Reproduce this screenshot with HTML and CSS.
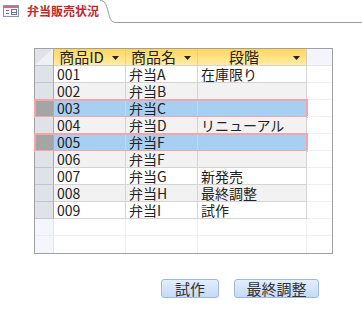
FILE: index.html
```html
<!DOCTYPE html>
<html lang="ja">
<head>
    <meta charset="UTF-8">
    <meta name="viewport" content="width=device-width, initial-scale=1.0">
    <title>弁当販売状況</title>
    <link rel="stylesheet" href="styles.css">
</head>
<body>
    <div class="tabbar">
        <div class="tab">
            <svg class="form-icon" width="16" height="12" viewBox="0 0 16 12">
                <rect x="0.5" y="0.5" width="15" height="11" fill="#f3f5f9" stroke="#8a94a8"/>
                <rect x="1" y="1" width="14" height="2" fill="#d06a8a"/>
                <rect x="3" y="5" width="3" height="1" fill="#6a7484"/>
                <rect x="3" y="8" width="3" height="1" fill="#6a7484"/>
                <rect x="8.5" y="4.5" width="5" height="5" fill="#ffffff" stroke="#6a7484"/>
                <rect x="9" y="7" width="4" height="1" fill="#6a7484"/>
            </svg>
            <span class="tab-title">弁当販売状況</span>
        </div>
        <svg class="tab-curve" width="16" height="23" viewBox="0 0 16 23">
            <path d="M0 0.5 C5 0.5 6 4 8 11 C10 19 11 22.5 16 22.5" fill="none" stroke="#9c9c9c"/>
        </svg>
        <div class="tab-rest"></div>
    </div>

    <div class="main">
        <div class="sheet">
            <div class="row head">
                <div class="rec">
                    <div class="sel corner"></div>
                    <div class="hcell"><span>商品ID</span><svg class="arrow" width="7" height="4"><polygon points="0,0 7,0 3.5,4" fill="#222"/></svg></div>
                    <div class="hcell"><span>商品名</span><svg class="arrow" width="7" height="4"><polygon points="0,0 7,0 3.5,4" fill="#222"/></svg></div>
                    <div class="hcell"><span>段階</span><svg class="arrow" width="7" height="4"><polygon points="0,0 7,0 3.5,4" fill="#222"/></svg></div>
                </div>
                <div class="fill"></div>
            </div>

            <div class="row">
                <div class="rec"><div class="sel"></div><div class="cell">001</div><div class="cell">弁当A</div><div class="cell">在庫限り</div></div>
                <div class="fill"></div>
            </div>
            <div class="row alt">
                <div class="rec"><div class="sel"></div><div class="cell">002</div><div class="cell">弁当B</div><div class="cell"></div></div>
                <div class="fill"></div>
            </div>
            <div class="row selected">
                <div class="rec"><div class="sel"></div><div class="cell">003</div><div class="cell">弁当C</div><div class="cell"></div></div>
                <div class="fill"></div>
            </div>
            <div class="row alt">
                <div class="rec"><div class="sel"></div><div class="cell">004</div><div class="cell">弁当D</div><div class="cell">リニューアル</div></div>
                <div class="fill"></div>
            </div>
            <div class="row selected">
                <div class="rec"><div class="sel"></div><div class="cell">005</div><div class="cell">弁当F</div><div class="cell"></div></div>
                <div class="fill"></div>
            </div>
            <div class="row alt">
                <div class="rec"><div class="sel"></div><div class="cell">006</div><div class="cell">弁当F</div><div class="cell"></div></div>
                <div class="fill"></div>
            </div>
            <div class="row">
                <div class="rec"><div class="sel"></div><div class="cell">007</div><div class="cell">弁当G</div><div class="cell">新発売</div></div>
                <div class="fill"></div>
            </div>
            <div class="row alt">
                <div class="rec"><div class="sel"></div><div class="cell">008</div><div class="cell">弁当H</div><div class="cell">最終調整</div></div>
                <div class="fill"></div>
            </div>
            <div class="row">
                <div class="rec"><div class="sel"></div><div class="cell">009</div><div class="cell">弁当I</div><div class="cell">試作</div></div>
                <div class="fill"></div>
            </div>

            <div class="row empty">
                <div class="rec"><div class="sel"></div><div class="cell"></div><div class="cell"></div><div class="cell"></div></div>
                <div class="fill"></div>
            </div>
            <div class="row empty">
                <div class="rec"><div class="sel"></div><div class="cell"></div><div class="cell"></div><div class="cell"></div></div>
                <div class="fill"></div>
            </div>
        </div>

        <div class="actions">
            <button class="btn btn-short">試作</button>
            <button class="btn btn-long">最終調整</button>
        </div>
    </div>
</body>
</html>
```

FILE: styles.css
```css
body {
    margin: 0;
    font-family: "Noto Sans CJK JP", "Liberation Sans", sans-serif;
    background: #ffffff;
    color: #222222;
}

/* tab strip */
.tabbar {
    display: flex;
    height: 23px;
}

.tab {
    width: 100px;
    display: flex;
    align-items: center;
    padding-left: 3px;
    box-sizing: border-box;
}

.form-icon {
    flex: none;
    margin-top: -1px;
}

.tab-title {
    margin-left: 8px;
    font-size: 12px;
    font-weight: bold;
    color: #c0282d;
    line-height: 14px;
    margin-top: -2px;
}

.tab-curve {
    flex: none;
    display: block;
}

.tab-rest {
    flex: 1;
    border-bottom: 1px solid #9c9c9c;
}

/* datasheet */
.main {
    padding: 25px 0 0 34px;
}

.sheet {
    width: 299px;
    border: 1px solid #a0a0a0;
    box-sizing: border-box;
    font-size: 14px;
}

.row {
    display: flex;
    height: 17px;
}

.rec {
    display: grid;
    grid-template-columns: 19px 72px 72px 109px;
    flex: none;
}

.fill {
    flex: 1;
    border-bottom: 1px solid #f0f0f0;
}

.sel,
.cell,
.hcell {
    box-sizing: border-box;
    border-right: 1px solid #d4d4d4;
    border-bottom: 1px solid #d4d4d4;
}

.sel {
    background: #dfe3e8;
    border-right-color: #a8acb2;
    border-bottom-color: #c2c6cc;
}

.cell {
    padding-left: 3px;
    line-height: 16px;
    white-space: nowrap;
}

/* header row */
.corner {
    background: linear-gradient(to top left, #eef0f3 50%, #dfe3e8 51%);
}

.hcell {
    display: flex;
    align-items: center;
    padding-right: 6px;
    background: linear-gradient(#ffd65e, #ffeca6);
    border-right-color: #d8cfae;
    font-size: 15px;
    line-height: 16px;
}

.hcell span {
    flex: 1;
    text-align: center;
    margin-right: 3px;
    white-space: nowrap;
}

.arrow {
    flex: none;
    margin-top: 2px;
}

.head .fill {
    background: #f4f4fc;
    border-bottom-color: #e4e4ec;
}

/* row states */
.alt .cell {
    background: #f2f2f2;
}

.selected .rec {
    background: #a7cff1;
    outline: 2px solid #f5a5a9;
    outline-offset: -1px;
}

.selected .sel {
    background: #a5a5a5;
}

.empty .sel {
    background: #f5f5ff;
    border-right-color: #e2e2ea;
    border-bottom-color: #ececf4;
}

.empty .cell {
    border-color: #f0f0f0;
}

.empty:last-child .sel,
.empty:last-child .cell,
.empty:last-child .fill {
    border-bottom: none;
}

/* buttons */
.actions {
    display: flex;
    gap: 15px;
    margin-top: 25px;
    padding-left: 127px;
}

.btn {
    height: 19px;
    padding: 0;
    border: 1px solid #99b9e0;
    border-radius: 3px;
    background: linear-gradient(#e4eefc, #c4daf6);
    font-family: "Noto Sans CJK JP", "Liberation Sans", sans-serif;
    font-size: 15px;
    line-height: 16px;
    color: #333333;
}

.btn-short {
    width: 58px;
}

.btn-long {
    width: 85px;
}
```
